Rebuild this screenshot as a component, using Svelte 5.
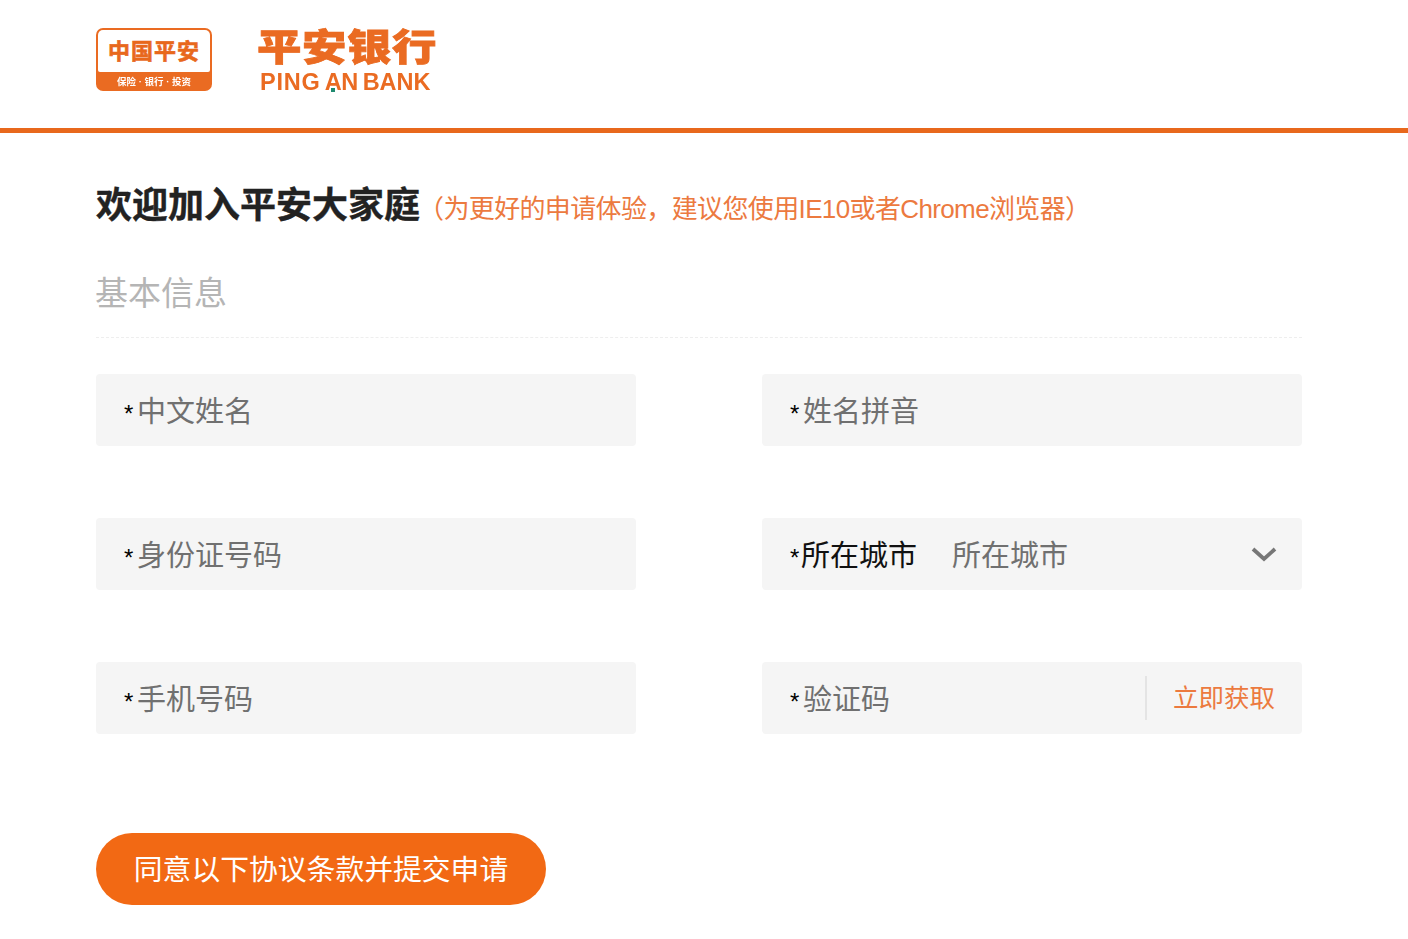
<script lang="ts">
  // left and right columns are filled row by row
  type Field = { label: string; kind?: string; value?: string };

  const fields: Field[] = [
    { label: '中文姓名' },
    { label: '姓名拼音' },
    { label: '身份证号码' },
    { label: '所在城市', kind: 'select', value: '所在城市' },
    { label: '手机号码' },
    { label: '验证码', kind: 'code' }
  ];
</script>

<header class="top">
  <div class="brand">
    <div class="badge">
      <div class="badge-main">中国平安</div>
      <div class="badge-sub">保险 · 银行 · 投资</div>
    </div>
    <div class="bank">
      <div class="bank-cn">平安银行</div>
      <div class="bank-en">PING<span class="an">A<i></i>N</span><span class="tail">BANK</span></div>
    </div>
  </div>
</header>

<main class="page">
  <div class="welcome">
    <h1>欢迎加入平安大家庭</h1>
    <span class="tip">（为更好的申请体验，建议您使用IE10或者Chrome浏览器）</span>
  </div>

  <h2>基本信息</h2>

  <div class="grid">
    {#each fields as field}
      <div class="field">
        <span class="star" class:tight={field.kind === 'select'}>*</span>
        {#if field.kind === 'select'}
          <span class="label dark">{field.label}</span>
          <span class="value">{field.value}</span>
          <svg class="arrow" width="26" height="16" viewBox="0 0 26 16">
            <path d="M2 3 L13 13 L24 3" fill="none" stroke="#777" stroke-width="3.8" />
          </svg>
        {:else}
          <span class="label">{field.label}</span>
        {/if}
        {#if field.kind === 'code'}
          <span class="get">立即获取</span>
        {/if}
      </div>
    {/each}
  </div>

  <button class="submit">同意以下协议条款并提交申请</button>
</main>

<style>
  :global(body) {
    background: #fff;
    font-family: "Liberation Sans", "Noto Sans CJK SC", sans-serif;
  }

  .top {
    height: 128px;
    border-bottom: 5px solid #e8681c;
    padding: 0 96px;
  }

  .brand {
    display: flex;
    align-items: flex-start;
    gap: 46px;
    padding-top: 28px;
    filter: blur(0.4px);
  }

  .badge {
    width: 116px;
    height: 63px;
    box-sizing: border-box;
    background: #ea6b22;
    border-radius: 7px;
    padding: 2px 2px 0;
    display: flex;
    flex-direction: column;
  }

  .badge-main {
    flex: none;
    height: 42px;
    background: #fff;
    border-radius: 5px 5px 2px 2px;
    color: #e8681c;
    font-size: 22px;
    line-height: 44px;
    font-weight: 700;
    text-align: center;
    letter-spacing: 1px;
    white-space: nowrap;
    overflow: hidden;
    -webkit-text-stroke: 0.6px #e8681c;
  }

  .badge-sub {
    color: #fff;
    font-size: 9.5px;
    line-height: 19px;
    font-weight: 700;
    text-align: center;
    white-space: nowrap;
  }

  .bank {
    width: 180px;
    color: #ea6b22;
  }

  .bank-cn {
    margin-top: 2px;
    margin-left: -1px;
    font-size: 37px;
    line-height: 38px;
    font-weight: 900;
    letter-spacing: 0.5px;
    white-space: nowrap;
    transform: scale(1.2, 1);
    transform-origin: left center;
    -webkit-text-stroke: 0.8px #ea6b22;
  }

  .bank-en {
    margin-top: 2px;
    margin-left: 2px;
    font-size: 23.5px;
    line-height: 24px;
    font-weight: 700;
    letter-spacing: 0.8px;
    white-space: nowrap;
  }

  .an {
    position: relative;
    margin: 0 5px 0 4px;
    letter-spacing: -0.5px;
  }

  .an i {
    position: absolute;
    left: 6px;
    bottom: 3px;
    width: 4px;
    height: 4px;
    background: #1f8a70;
  }

  .tail {
    letter-spacing: 0;
  }

  .page {
    width: 1206px;
    margin-left: 96px;
  }

  .welcome {
    display: flex;
    align-items: center;
    height: 42px;
    margin-top: 48px;
  }

  h1 {
    margin: 0;
    font-size: 36px;
    font-weight: 700;
    color: #222;
    white-space: nowrap;
    -webkit-text-stroke: 0.4px #222;
  }

  .tip {
    margin-left: -2px;
    margin-top: 9px;
    font-size: 26px;
    color: #ec7a3f;
    white-space: nowrap;
    letter-spacing: -0.63px;
  }

  h2 {
    margin: 49px 0 0;
    padding-bottom: 21px;
    border-bottom: 1px dashed #eee;
    font-size: 33px;
    line-height: 44px;
    font-weight: 400;
    color: #b5b5b5;
    text-indent: -1px;
  }

  .grid {
    display: grid;
    grid-template-columns: 540px 540px;
    column-gap: 126px;
    row-gap: 72px;
    margin-top: 36px;
  }

  .field {
    height: 72px;
    box-sizing: border-box;
    background: #f5f5f5;
    border-radius: 4px;
    display: flex;
    align-items: center;
    padding: 0 28px 2px;
    font-size: 29px;
    color: #707070;
  }

  .star {
    color: #000;
    font-size: 24px;
    width: 13px;
    margin-top: 10px;
  }

  .star.tight {
    width: 11px;
  }

  .label.dark {
    color: #111;
  }

  .value {
    margin-left: 35px;
  }

  .arrow {
    margin-left: auto;
    margin-right: -3px;
    margin-top: 2px;
  }

  .get {
    margin-left: auto;
    margin-right: -1px;
    margin-top: 2px;
    height: 44px;
    line-height: 44px;
    padding-left: 26px;
    border-left: 2px solid #e4e4e4;
    color: #ec7a3f;
    font-size: 25.5px;
    white-space: nowrap;
  }

  .submit {
    display: block;
    width: 450px;
    height: 72px;
    margin-top: 99px;
    border: none;
    border-radius: 36px;
    background: #f26914;
    color: #fff;
    font-family: inherit;
    font-size: 28.8px;
    padding: 0 0 4px;
  }
</style>
